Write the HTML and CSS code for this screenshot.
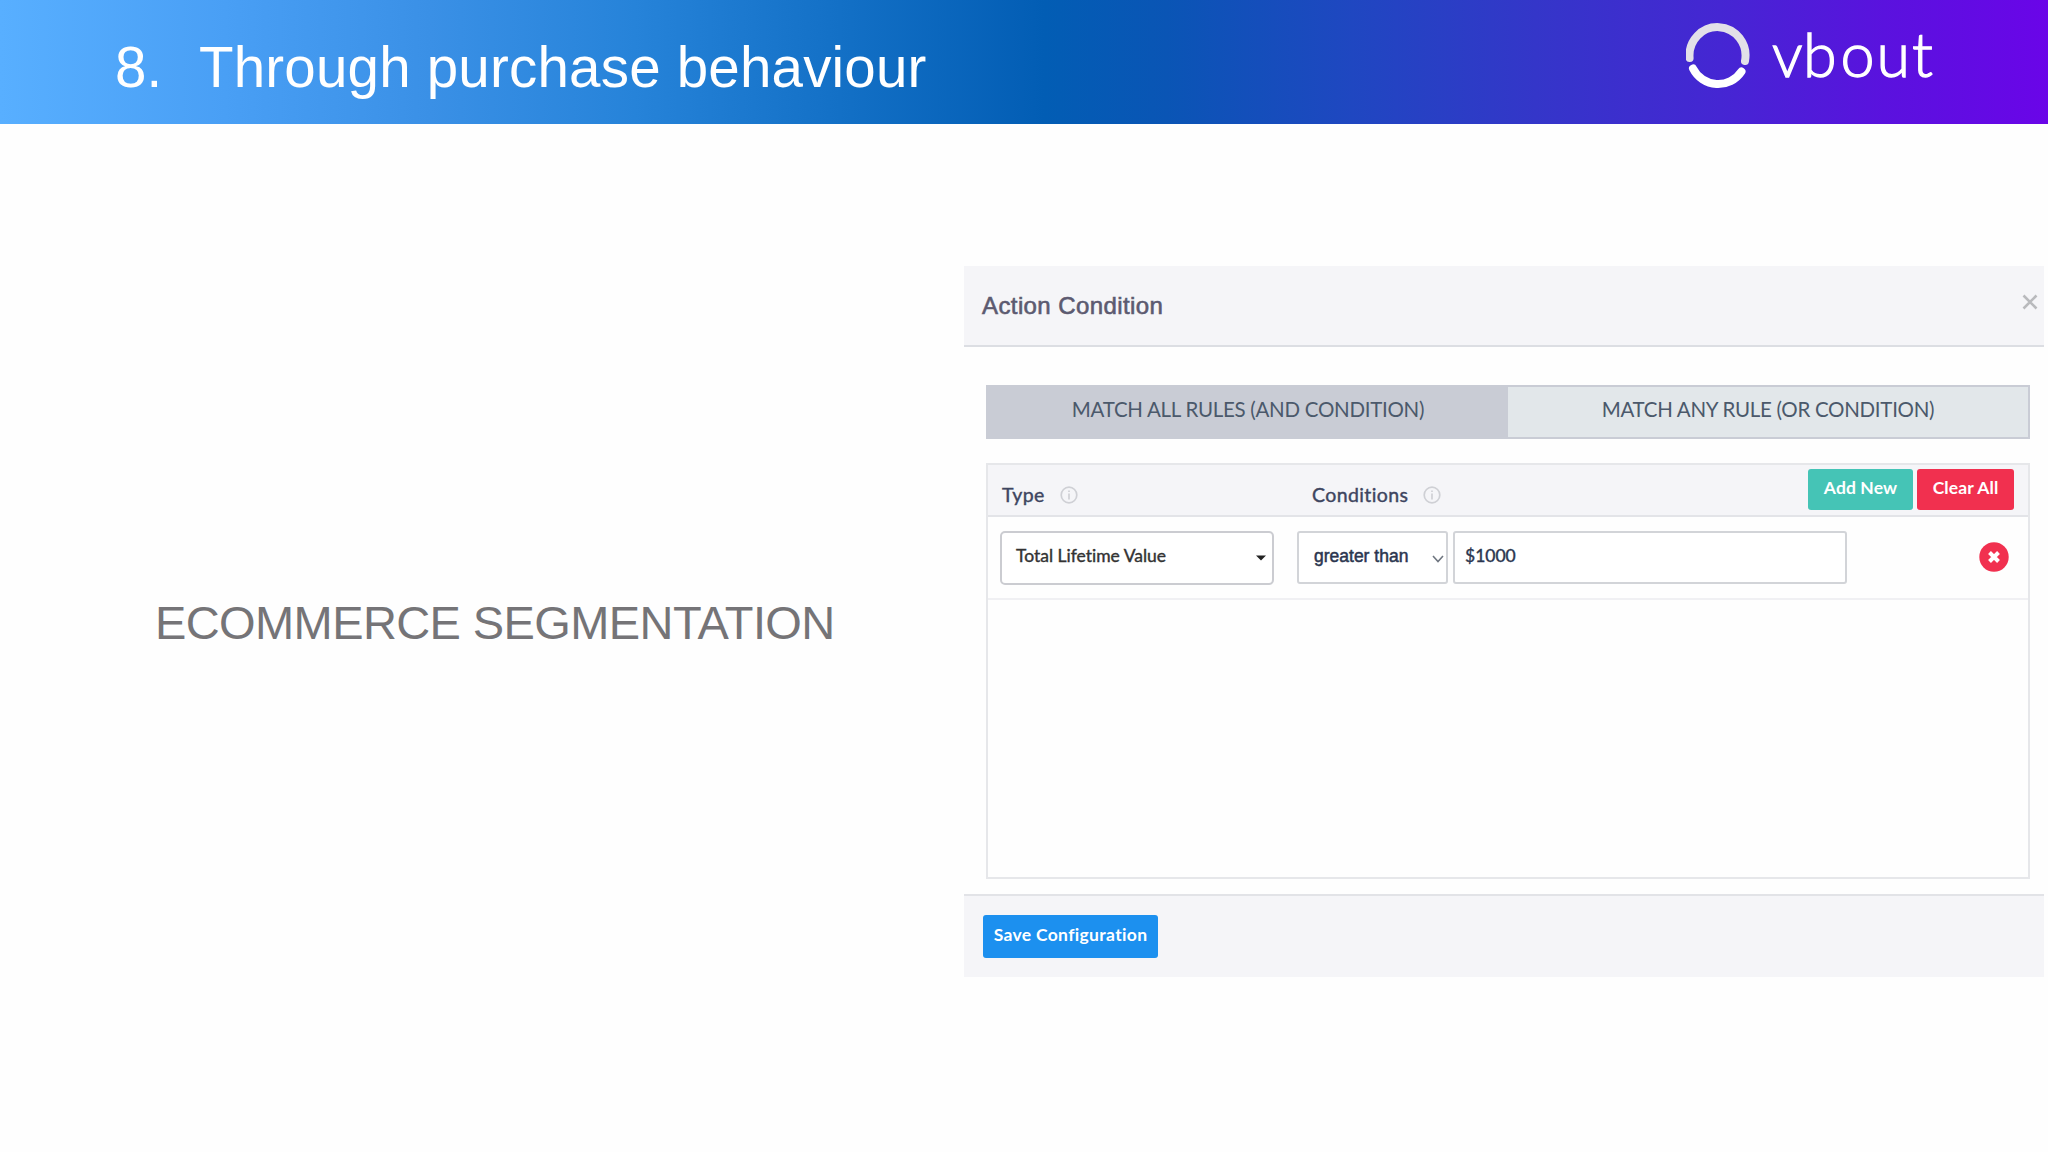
FILE: index.html
```html
<!DOCTYPE html>
<html lang="en">
<head>
    <meta charset="UTF-8">
    <meta name="viewport" content="width=device-width, initial-scale=1.0">
    <title>Through purchase behaviour</title>
    <link rel="stylesheet" href="styles.css">
</head>
<body>
    <header class="slide-header">
        <h1><span class="number">8.</span><span class="title">Through purchase behaviour</span></h1>
        <svg class="logo" width="250" height="90" viewBox="0 0 250 90">
            <path class="ring-top" d="M3.6 47 A28 28.5 0 1 1 59 50"/>
            <path class="ring-bottom" d="M7 57.5 A28 28 0 0 0 55.5 60.5"/>
            <text class="wordmark" y="65.5" x="86 117 154.5 190.5 226">vbout</text>
        </svg>
    </header>

    <main class="slide">
        <h2>ECOMMERCE SEGMENTATION</h2>

        <section class="modal">
            <div class="modal-header">
                <h3>Action Condition</h3>
                <svg class="close" width="16" height="16" viewBox="0 0 16 16"><path d="M1.5 1.5 L14.5 14.5 M14.5 1.5 L1.5 14.5"/></svg>
            </div>

            <div class="modal-body">
                <div class="tabs">
                    <div class="tab active">MATCH ALL RULES (AND CONDITION)</div>
                    <div class="tab">MATCH ANY RULE (OR CONDITION)</div>
                </div>

                <div class="rules">
                    <div class="rules-header">
                        <div class="col-type">
                            <span>Type</span>
                            <svg class="info" width="18" height="18" viewBox="0 0 18 18"><circle cx="9" cy="9" r="7.8"/><path d="M9 4.5v1.6M9 7.5v6"/></svg>
                        </div>
                        <div class="col-conditions">
                            <span>Conditions</span>
                            <svg class="info" width="18" height="18" viewBox="0 0 18 18"><circle cx="9" cy="9" r="7.8"/><path d="M9 4.5v1.6M9 7.5v6"/></svg>
                        </div>
                        <div class="buttons">
                            <div class="btn btn-add">Add New</div>
                            <div class="btn btn-clear">Clear All</div>
                        </div>
                    </div>
                    <div class="rule">
                        <div class="field field-type">
                            <span>Total Lifetime Value</span>
                            <svg width="10" height="6" viewBox="0 0 10 6"><path d="M0 .5h10L5 5.5z" fill="#222"/></svg>
                        </div>
                        <div class="field field-operator">
                            <span>greater than</span>
                            <svg width="12" height="8" viewBox="0 0 12 8"><path d="M1 1l5 5.5L11 1" fill="none" stroke="#6f7680" stroke-width="1.6"/></svg>
                        </div>
                        <div class="field field-value"><span>$1000</span></div>
                        <svg class="remove" width="30" height="30" viewBox="0 0 30 30">
                            <circle cx="15" cy="15" r="14.7" fill="#f1304f"/>
                            <path d="M10.5 10.5l9 9M19.5 10.5l-9 9" stroke="#fff" stroke-width="4"/>
                        </svg>
                    </div>
                </div>
            </div>

            <div class="modal-footer">
                <div class="btn btn-save">Save Configuration</div>
            </div>
        </section>
    </main>
</body>
</html>
```
FILE: styles.css
```css
* {
    box-sizing: border-box;
}
body {
    margin: 0;
    height: 1152px;
    overflow: hidden;
    background: #fefefe;
    font-family: Lato, sans-serif;
    font-variant-ligatures: none;
}
h1, h2, h3 {
    margin: 0;
    font-family: "Liberation Sans", Arial, sans-serif;
    font-weight: normal;
    white-space: nowrap;
}

/* header */
.slide-header {
    display: flex;
    justify-content: space-between;
    height: 124px;
    padding: 0 112px 0 115px;
    background: linear-gradient(90deg, #58afff 0%, #499ff5 11%, #3a90e6 21%, #2683d9 31%, #1370c6 41%, #025db4 51%, #0a55b5 57%, #1f47c1 66%, #3436c9 75%, #4526d3 84%, #5a12de 92%, #6a05e8 100%);
    color: white;
}
h1 {
    display: flex;
    padding-top: 36px;
    font-size: 56.5px;
    line-height: 64px;
}
.number {
    width: 84px;
}
.title {
    letter-spacing: 0.2px;
}
.logo {
    margin-top: 11px;
    fill: none;
    stroke-width: 8;
    stroke-linecap: round;
}
.ring-top {
    stroke: #e2e0e8;
}
.ring-bottom {
    stroke: white;
}
.wordmark {
    font-family: Lato, sans-serif;
    font-size: 61px;
    font-weight: 300;
    fill: white;
    stroke: white;
    stroke-width: 1.3;
}

/* slide content */
.slide {
    display: flex;
    justify-content: space-between;
    padding: 142px 4px 0 155px;
}
h2 {
    padding-top: 330px;
    color: #757477;
    font-size: 47px;
    letter-spacing: -0.6px;
    line-height: 54px;
}
.modal {
    display: flex;
    flex-direction: column;
    width: 1080px;
    height: 711px;
}
.modal-header {
    display: flex;
    justify-content: space-between;
    height: 81px;
    padding: 0 6px 0 18px;
    background: #f5f5f8;
    border-bottom: 2px solid #dcdee3;
}
h3 {
    padding-top: 26px;
    color: #5c5a70;
    font-size: 24px;
    letter-spacing: 0.4px;
    line-height: 28px;
    -webkit-text-stroke: 0.6px #5c5a70;
}
.close {
    margin-top: 28px;
    stroke: #b9babd;
    stroke-width: 2.6;
}
.modal-body {
    flex: 1;
    padding: 38px 14px 0 22px;
}
.tabs {
    display: flex;
    height: 54px;
    border: 2px solid #c9ccd5;
    background: #e2e7ea;
}
.tab {
    flex: 1;
    padding-top: 10px;
    color: #4b596b;
    font-size: 20.5px;
    letter-spacing: -0.28px;
    line-height: 24px;
    text-align: center;
    white-space: nowrap;
}
.active {
    background: #c9ccd5;
}
.rules {
    height: 416px;
    margin-top: 24px;
    border: 2px solid #e6e7ea;
}
.rules-header {
    display: flex;
    height: 52px;
    padding: 0 14px;
    background: #f5f5f8;
    border-bottom: 2px solid #e3e4e8;
    color: #3e4560;
    font-size: 19.5px;
    letter-spacing: 0.4px;
    line-height: 24px;
}
.col-type, .col-conditions {
    display: flex;
    gap: 15px;
    padding-top: 18px;
    width: 310px;
    -webkit-text-stroke: 0.4px #3e4560;
}
.info {
    margin-top: 3px;
    fill: none;
    stroke: #cfd0d5;
    stroke-width: 1.7;
}
.buttons {
    display: flex;
    gap: 4px;
    margin-left: auto;
    padding-top: 4px;
}
.btn {
    border-radius: 3px;
    color: white;
    font-size: 17.5px;
    font-weight: bold;
    letter-spacing: 0.1px;
    line-height: 22px;
    text-align: center;
    white-space: nowrap;
}
.btn-add {
    width: 105px;
    height: 41px;
    padding-top: 8px;
    background: #45c4b6;
}
.btn-clear {
    width: 97px;
    height: 41px;
    padding-top: 8px;
    background: #f1304f;
}
.rule {
    display: flex;
    height: 83px;
    padding: 14px 19px 0 12px;
    border-bottom: 2px solid #f0f0f3;
    color: #2b3650;
    font-size: 17.5px;
    line-height: 22px;
}
.field {
    display: flex;
    justify-content: space-between;
    height: 53px;
    padding-top: 12px;
    border: 2px solid #d2d4d8;
    border-radius: 3px;
    background: white;
    white-space: nowrap;
}
.field-type {
    width: 274px;
    height: 54px;
    padding-left: 14px;
    padding-right: 6px;
    border-color: #cbccd1;
    border-radius: 5px;
    color: #333;
    -webkit-text-stroke: 0.4px #333;
}
.field-type svg {
    margin-top: 10px;
}
.field-operator {
    width: 151px;
    margin-left: 23px;
    padding-left: 15px;
    padding-right: 2px;
    font-family: "Liberation Sans", Arial, sans-serif;
    -webkit-text-stroke: 0.5px #2b3650;
}
.field-operator svg {
    margin-top: 10px;
}
.field-value {
    width: 394px;
    margin-left: 5px;
    padding-left: 10px;
    -webkit-text-stroke: 0.4px #2b3650;
}
.remove {
    margin: 11px 0 0 auto;
}

/* footer */
.modal-footer {
    height: 83px;
    padding: 19px 19px 0;
    background: #f5f5f8;
    border-top: 2px solid #e2e3e7;
}
.btn-save {
    width: 175px;
    height: 43px;
    padding-top: 9px;
    background: #1c90ef;
    letter-spacing: 0.33px;
}
```
